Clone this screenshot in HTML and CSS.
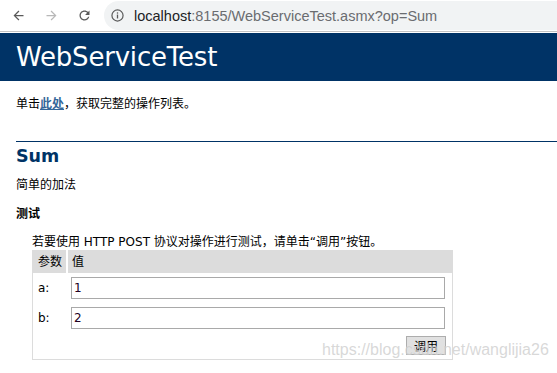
FILE: index.html
```html
<!DOCTYPE html>
<html lang="zh-CN">
<head>
    <meta charset="UTF-8">
    <title>WebServiceTest Web 服务</title>
    <link rel="stylesheet" href="styles.css">
</head>
<body>
    <div class="toolbar">
        <svg class="nav" width="15" height="15" viewBox="0 0 24 24"><path fill="#5a5a5a" d="M20 11H7.83l5.59-5.59L12 4l-8 8 8 8 1.41-1.41L7.83 13H20v-2z"/></svg>
        <svg class="nav" width="15" height="15" viewBox="0 0 24 24"><path fill="#b8b8b8" d="M12 4l-1.41 1.41L16.17 11H4v2h12.17l-5.58 5.59L12 20l8-8z"/></svg>
        <svg class="nav" width="15" height="15" viewBox="0 0 24 24"><path fill="#5a5a5a" d="M17.65 6.35C16.2 4.9 14.21 4 12 4c-4.42 0-7.99 3.58-7.99 8s3.57 8 7.99 8c3.73 0 6.84-2.55 7.73-6h-2.08c-.82 2.33-3.04 4-5.65 4-3.31 0-6-2.69-6-6s2.69-6 6-6c1.66 0 3.14.69 4.22 1.78L13 11h7V4l-2.35 2.35z"/></svg>
        <div class="omnibox">
            <svg class="info" width="13" height="13" viewBox="0 0 14 14">
                <circle cx="7" cy="7" r="6" fill="none" stroke="#5a5a5a" stroke-width="1.3"/>
                <rect x="6.3" y="6" width="1.4" height="4.2" fill="#5a5a5a"/>
                <rect x="6.3" y="3.6" width="1.4" height="1.4" fill="#5a5a5a"/>
            </svg>
            <span class="host">localhost</span><span class="path">:8155/WebServiceTest.asmx?op=Sum</span>
        </div>
    </div>

    <div class="heading1">WebServiceTest</div>

    <div class="content">
        <p class="intro">单击<a href="#">此处</a>，获取完整的操作列表。</p>

        <h2>Sum</h2>
        <p class="desc">简单的加法</p>

        <h3>测试</h3>
        <p class="intro-test">若要使用 HTTP POST 协议对操作进行测试，请单击“调用”按钮。</p>

        <table class="frm">
            <tr>
                <td class="frm-header col-name">参数</td>
                <td class="frm-header col-value">值</td>
            </tr>
            <tr>
                <td class="frm-text">a:</td>
                <td class="frm-cell"><input class="frm-input" type="text" value="1"></td>
            </tr>
            <tr>
                <td class="frm-text">b:</td>
                <td class="frm-cell"><input class="frm-input" type="text" value="2"></td>
            </tr>
            <tr>
                <td></td>
                <td class="frm-cell button-cell"><button class="button">调用</button></td>
            </tr>
        </table>
    </div>

    <div class="watermark">https://blog.csdn.net/wanglijia26</div>
</body>
</html>
```

FILE: styles.css
```css
body {
    margin: 0;
    background: #fff;
    color: #000;
    font-family: "DejaVu Sans", "Noto Sans CJK SC", sans-serif;
    font-size: 12px;
}

.toolbar {
    height: 31px;
    display: flex;
    align-items: center;
    border-bottom: 1px solid #c4c4c4;
    padding-left: 11px;
}

.nav {
    margin-right: 18px;
    flex: none;
}

.omnibox {
    flex: 1;
    height: 29px;
    margin-left: -6px;
    background: #f1f3f4;
    border-radius: 15px 0 0 15px;
    display: flex;
    align-items: center;
    padding-left: 7px;
    font-family: "Liberation Sans", Arial, sans-serif;
    font-size: 14.5px;
}

.info {
    margin-right: 10px;
}

.host {
    color: #202124;
}

.path {
    color: #6a6c70;
}

.heading1 {
    background: #003366;
    color: #fff;
    font-family: "DejaVu Sans", sans-serif;
    font-size: 26px;
    letter-spacing: -0.2px;
    height: 48px;
    line-height: 48px;
    padding-left: 16px;
    margin-top: 1px;
}

.content {
    padding-left: 16px;
}

.content p {
    margin: 0;
    line-height: 16px;
}

.intro {
    padding-top: 15px;
}

.intro a {
    color: #336699;
    font-weight: bold;
    text-decoration: underline;
}

h2 {
    margin: 29px 0 11px;
    padding-top: 4px;
    border-top: 1px solid #003366;
    color: #003366;
    font-size: 17.5px;
    line-height: 20px;
}

h3 {
    margin: 13px 0 12px;
    font-size: 12px;
    line-height: 16px;
}

.intro-test {
    padding-left: 16px;
}

.frm {
    margin-left: 16px;
    border-collapse: collapse;
    border: 1px solid #dcdcdc;
    width: 421px;
}

.frm td {
    padding: 4px 5px;
    line-height: 14px;
    white-space: nowrap;
}

.frm-header {
    background: #dcdcdc;
}

.col-name {
    width: 26px;
    padding-right: 2px !important;
    border-right: 2px solid #fff;
}

.frm-cell,
.col-value {
    padding-left: 4px !important;
    padding-right: 6px !important;
}

.frm-input {
    box-sizing: border-box;
    width: 374px;
    height: 22px;
    margin: 0;
    padding: 0 2px;
    border: 1px solid #a9a9a9;
    font-family: "DejaVu Sans", sans-serif;
    font-size: 12px;
    color: #220022;
    display: block;
}

.button-cell {
    text-align: right;
    padding-top: 3px !important;
}

.button {
    height: 19px;
    padding: 0 7px;
    margin: 0;
    background: #e1e1e1;
    border: 1px solid #adadad;
    font-family: "Noto Sans CJK SC", sans-serif;
    font-size: 12px;
    line-height: 17px;
    vertical-align: top;
}

.watermark {
    position: absolute;
    left: 322px;
    top: 341px;
    font-family: "Liberation Sans", Arial, sans-serif;
    font-size: 16px;
    color: rgba(190, 190, 190, 0.6);
    text-shadow: 0 0 1px rgba(255, 255, 255, 0.6);
}
```
